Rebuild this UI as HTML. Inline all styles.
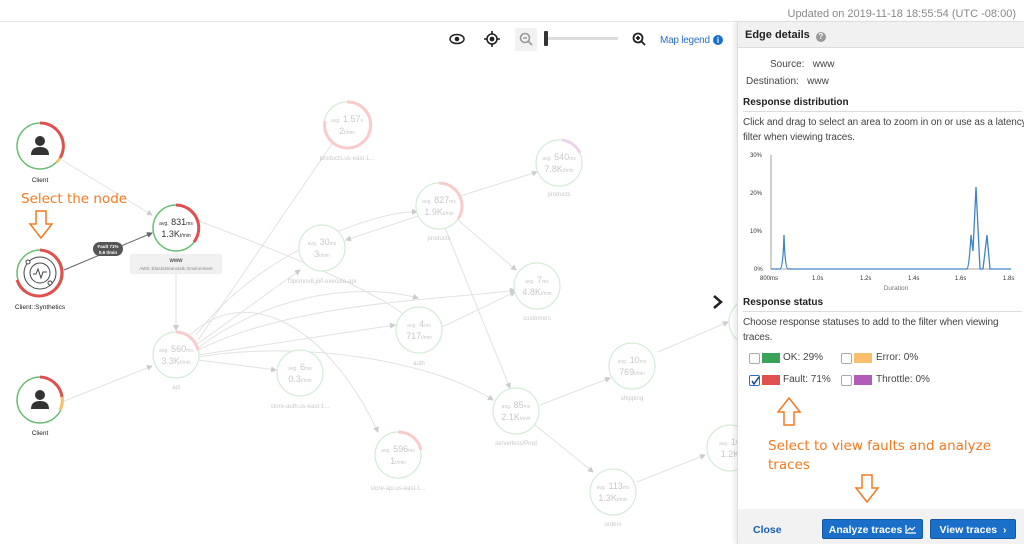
<!DOCTYPE html>
<html><head><meta charset="utf-8">
<style>
*{margin:0;padding:0;box-sizing:border-box}
body{width:1024px;height:544px;overflow:hidden;background:#fff;font-family:"Liberation Sans",sans-serif;position:relative}
.top{position:absolute;left:0;top:0;width:1024px;height:22px;border-bottom:1px solid #e6e6e6}
.upd{position:absolute;right:8px;top:8px;font-size:11px;color:#888}
.panel{position:absolute;left:737px;top:22px;width:287px;height:522px;background:#fff;border-left:1px solid #ddd;box-shadow:-3px 0 4px rgba(0,0,0,.08)}
.ph{height:26px;background:#f1f1f1;border-bottom:1px solid #ddd;font-size:11px;font-weight:bold;color:#222;padding:7px 7px}
.q{display:inline-block;width:10px;height:10px;border-radius:50%;background:#999;color:#fff;font-size:8px;text-align:center;line-height:10px;vertical-align:-1px;margin-left:3px}
.kv{font-size:10px;color:#444;position:absolute}
.sec{position:absolute;left:5px;width:279px;font-size:10px;font-weight:bold;color:#222;border-bottom:1px solid #ddd;padding-bottom:3px}
.txt{position:absolute;left:5px;font-size:10px;color:#444;line-height:15px;width:284px;letter-spacing:-0.1px}
.cb{position:absolute;width:11px;height:11px;border:1px solid #aaa;border-radius:2px;background:#fff}
.sw{position:absolute;width:18px;height:10px}
.lbl{position:absolute;font-size:10px;color:#444}
.foot{position:absolute;left:0;top:487px;width:287px;height:35px;background:#f2f2f2}
.btn{position:absolute;top:497px;height:20px;background:#1a6fc9;color:#fff;font-size:10.5px;font-weight:bold;border-radius:2px;text-align:center;line-height:20px;border:1px solid #14589f}
.or{color:#f47a20;font-family:"DejaVu Sans",sans-serif;font-size:13.5px;position:absolute}
</style></head><body>
<div class="top"><div class="upd">Updated on 2019-11-18 18:55:54 (UTC -08:00)</div></div>

<svg width="737" height="544" style="position:absolute;left:0;top:0" font-family="Liberation Sans">
<defs><marker id="a" markerWidth="6" markerHeight="6" refX="5" refY="3" orient="auto"><path d="M0,0L6,3L0,6z" fill="#ccc"/></marker>
<marker id="b" markerWidth="6" markerHeight="6" refX="5" refY="3" orient="auto"><path d="M0,0L6,3L0,6z" fill="#666"/></marker></defs>
<g transform="translate(457,39)"><ellipse cx="0" cy="0" rx="7" ry="4.5" fill="none" stroke="#222" stroke-width="1.5"/><circle cx="0" cy="0" r="2.3" fill="#222"/></g>
<g transform="translate(492,39)" stroke="#222" stroke-width="1.6" fill="none"><circle r="5"/><circle r="1.6" fill="#222"/><path d="M0,-8V-5M0,5V8M-8,0H-5M5,0H8"/></g>
<rect x="515" y="28" width="22" height="23" rx="2" fill="#f2f2f2"/>
<g transform="translate(525,38)" stroke="#999" stroke-width="1.6" fill="none"><circle r="4.5"/><path d="M3,3L7,7M-2,0H2"/></g>
<rect x="544" y="31" width="4" height="15" rx="1" fill="#333"/><rect x="548" y="37" width="70" height="3" fill="#ddd"/>
<g transform="translate(638,38)" stroke="#222" stroke-width="1.8" fill="none"><circle r="4.5"/><path d="M3,3L7,7M-2,0H2M0,-2V2"/></g>
<text x="660" y="43" font-size="10" fill="#2a6fc9" textLength="50">Map legend</text><circle cx="718" cy="40" r="5" fill="#1a6fc9"/><text x="718" y="43" font-size="8" fill="#fff" text-anchor="middle" font-weight="bold">i</text>
<g stroke="#e2e2e2" stroke-width="1" fill="none" marker-end="url(#a)">
<path d="M62,160L152,215"/>
<path d="M62,402L152,366"/>
<path d="M176,252L176,330"/>
<path d="M196,220C250,240 380,290 410,320"/>
<path d="M198,340L340,132"/>
<path d="M196,345L300,270"/>
<path d="M198,348C260,300 350,280 418,298" />
<path d="M198,355L395,325"/>
<path d="M198,350C300,300 450,300 515,290"/>
<path d="M198,357C300,340 430,360 493,400"/>
<path d="M198,360L276,370"/>
<path d="M190,335C250,280 330,330 378,432"/>
<path d="M196,335C260,250 380,210 417,212"/>
<path d="M418,216L346,240"/>
<path d="M460,196L537,172"/>
<path d="M458,220L516,270"/>
<path d="M445,228L510,388"/>
<path d="M440,328L515,292"/>
<path d="M540,405L610,378"/>
<path d="M535,425L593,472"/>
<path d="M637,482L705,455"/>
<path d="M658,352L728,322"/>
</g>
<path d="M64,270L152,233" stroke="#666" stroke-width="1" marker-end="url(#b)"/>
<rect x="93" y="242" width="30" height="14" rx="7" fill="#555"/>
<text x="108" y="248" font-size="4.5" fill="#fff" text-anchor="middle" font-weight="bold">Fault 71%</text>
<text x="108" y="254" font-size="4.5" fill="#fff" text-anchor="middle" font-weight="bold">0.6 t/min</text>
<g>
<circle cx="40" cy="146" r="23" fill="#fff" stroke="#6bbf76" stroke-width="1.5"/>
<path d="M40,123A23,23 0 0 1 60,158" stroke="#e05050" stroke-width="3" fill="none"/>
<path d="M60,158A23,23 0 0 1 57,162" stroke="#f5c06b" stroke-width="3" fill="none"/>
<circle cx="40" cy="141" r="5" fill="#333"/><path d="M31,155Q31,147 40,147Q49,147 49,155Z" fill="#333"/>
<text x="40" y="182" font-size="6.5" fill="#222" text-anchor="middle">Client</text>
</g>
<g>
<circle cx="40" cy="400" r="23" fill="#fff" stroke="#6bbf76" stroke-width="1.5"/>
<path d="M40,377A23,23 0 0 1 62,397" stroke="#e05050" stroke-width="3" fill="none"/>
<path d="M62,397A23,23 0 0 1 60,410" stroke="#f5c06b" stroke-width="3" fill="none"/>
<circle cx="40" cy="395" r="5" fill="#333"/><path d="M31,409Q31,401 40,401Q49,401 49,409Z" fill="#333"/>
<text x="40" y="435" font-size="6.5" fill="#222" text-anchor="middle">Client</text>
</g>
<g>
<circle cx="40" cy="273" r="23" fill="#fff" stroke="#6bbf76" stroke-width="1.5"/>
<path d="M40,250A23,23 0 1 1 17,280" stroke="#e05050" stroke-width="3" fill="none"/>
<circle cx="40" cy="273" r="16" fill="none" stroke="#444" stroke-width="1"/>
<circle cx="40" cy="273" r="10" fill="none" stroke="#444" stroke-width="1"/>
<circle cx="28" cy="262" r="2" fill="#fff" stroke="#444"/><circle cx="50" cy="283" r="2" fill="#fff" stroke="#444"/>
<path d="M33,274H36L38,269L41,278L43,272H47" stroke="#444" fill="none"/>
<text x="40" y="309" font-size="6.5" fill="#222" text-anchor="middle">Client::Synthetics</text>
</g>
<g>
<circle cx="176" cy="228" r="23" fill="#fff" stroke="#6bbf76" stroke-width="1.5"/>
<path d="M176,205A23,23 0 0 1 194,242" stroke="#e05050" stroke-width="3" fill="none"/>
<text x="176" y="225" font-size="9" fill="#333" text-anchor="middle"><tspan font-size="5">avg.</tspan> 831<tspan font-size="5">ms</tspan></text>
<text x="176" y="237" font-size="9" fill="#333" text-anchor="middle">1.3K<tspan font-size="5">t/min</tspan></text>
<rect x="130" y="254" width="92" height="20" rx="2" fill="#f0f0f0"/>
<text x="176" y="262" font-size="6" fill="#222" text-anchor="middle">www</text>
<text x="176" y="270" font-size="4.5" fill="#888" text-anchor="middle">AWS::ElasticBeanstalk::Environment</text>
</g>
<g fill="#fff" stroke="#d3ecd6" stroke-width="1.2">
<circle cx="176" cy="355" r="23"/><path d="M176,332A23,23 0 0 1 198,350" stroke="#f8cccc" stroke-width="3" fill="none"/>
<circle cx="347" cy="125" r="23"/><path d="M347,102A23,23 0 1 1 325,121" stroke="#f8cccc" stroke-width="3" fill="none"/>
<circle cx="439" cy="206" r="23"/><path d="M439,183A23,23 0 0 1 458,219" stroke="#f8cccc" stroke-width="3" fill="none"/>
<circle cx="559" cy="163" r="23"/><path d="M562,140A23,23 0 0 1 580,153" stroke="#ecd3ec" stroke-width="3" fill="none"/>
<circle cx="322" cy="248" r="23"/>
<circle cx="537" cy="286" r="23"/>
<circle cx="419" cy="330" r="23"/>
<circle cx="300" cy="373" r="23"/>
<circle cx="398" cy="455" r="23"/><path d="M398,432A23,23 0 0 1 421,450" stroke="#f8cccc" stroke-width="3" fill="none"/>
<circle cx="516" cy="411" r="23"/>
<circle cx="632" cy="366" r="23"/>
<circle cx="613" cy="492" r="23"/>
<circle cx="730" cy="448" r="23"/>
<circle cx="752" cy="322" r="23"/>
</g>
<g fill="#c8c8c8" font-size="9" text-anchor="middle">
<text x="176" y="352"><tspan font-size="5">avg.</tspan> 560<tspan font-size="5">ms</tspan></text><text x="176" y="364">3.3K<tspan font-size="5">t/min</tspan></text><text x="176" y="389" font-size="6">api</text>
<text x="347" y="122"><tspan font-size="5">avg.</tspan> 1.57<tspan font-size="5">s</tspan></text><text x="347" y="134">2<tspan font-size="5">t/min</tspan></text><text x="347" y="160" font-size="6">products.us-east-1...</text>
<text x="439" y="203"><tspan font-size="5">avg.</tspan> 827<tspan font-size="5">ms</tspan></text><text x="439" y="215">1.9K<tspan font-size="5">t/min</tspan></text><text x="439" y="240" font-size="6">products</text>
<text x="559" y="160"><tspan font-size="5">avg.</tspan> 540<tspan font-size="5">ms</tspan></text><text x="559" y="172">7.8K<tspan font-size="5">t/min</tspan></text><text x="559" y="196" font-size="6">products</text>
<text x="322" y="245"><tspan font-size="5">avg.</tspan> 30<tspan font-size="5">ms</tspan></text><text x="322" y="257">3<tspan font-size="5">t/min</tspan></text><text x="322" y="283" font-size="6">f3pcmnv8.jo0.execute-api</text>
<text x="537" y="283"><tspan font-size="5">avg.</tspan> 7<tspan font-size="5">ms</tspan></text><text x="537" y="295">4.8K<tspan font-size="5">t/min</tspan></text><text x="537" y="320" font-size="6">customers</text>
<text x="419" y="327"><tspan font-size="5">avg.</tspan> 4<tspan font-size="5">ms</tspan></text><text x="419" y="339">717<tspan font-size="5">t/min</tspan></text><text x="419" y="365" font-size="6">auth</text>
<text x="300" y="370"><tspan font-size="5">avg.</tspan> 6<tspan font-size="5">ms</tspan></text><text x="300" y="382">0.3<tspan font-size="5">t/min</tspan></text><text x="300" y="408" font-size="6">store-auth.us-east-1...</text>
<text x="398" y="452"><tspan font-size="5">avg.</tspan> 596<tspan font-size="5">ms</tspan></text><text x="398" y="464">1<tspan font-size="5">t/min</tspan></text><text x="398" y="490" font-size="6">store-api.us-east-1...</text>
<text x="516" y="408"><tspan font-size="5">avg.</tspan> 85<tspan font-size="5">ms</tspan></text><text x="516" y="420">2.1K<tspan font-size="5">t/min</tspan></text><text x="516" y="445" font-size="6">serverless/Prod</text>
<text x="632" y="363"><tspan font-size="5">avg.</tspan> 10<tspan font-size="5">ms</tspan></text><text x="632" y="375">769<tspan font-size="5">t/min</tspan></text><text x="632" y="400" font-size="6">shipping</text>
<text x="613" y="489"><tspan font-size="5">avg.</tspan> 113<tspan font-size="5">ms</tspan></text><text x="613" y="501">1.3K<tspan font-size="5">t/min</tspan></text><text x="613" y="526" font-size="6">orders</text>
<text x="730" y="445"><tspan font-size="5">avg.</tspan> 10</text><text x="730" y="457">1.2K</text>
</g>
<path d="M714,296L721,302L714,308" stroke="#222" stroke-width="2.5" fill="none"/>
</svg>
<div class="or" style="left:21px;top:191px">Select the node</div>
<svg style="position:absolute;left:28px;top:210px" width="26" height="30"><path d="M8,1H18V14H24L13,28L2,14H8Z" fill="#fff" stroke="#f47a20" stroke-width="1.5"/></svg>

<div class="panel">
<div class="ph">Edge details <span class="q">?</span></div>
<div class="kv" style="left:32px;top:37px">Source:&nbsp;&nbsp;&nbsp;www</div>
<div class="kv" style="left:8px;top:54px">Destination:&nbsp;&nbsp;&nbsp;www</div>
<div class="sec" style="top:75px">Response distribution</div>
<div class="txt" style="top:93px">Click and drag to select an area to zoom in on or use as a latency filter when viewing traces.</div>
<svg style="position:absolute;left:0;top:125px" width="287" height="150" font-family="Liberation Sans">
<g font-size="6" fill="#333"><text x="12" y="10">30%</text><text x="12" y="48">20%</text><text x="12" y="86">10%</text><text x="16" y="124">0%</text>
<text x="22" y="133">800ms</text><text x="74" y="133">1.0s</text><text x="122" y="133">1.2s</text><text x="170" y="133">1.4s</text><text x="217" y="133">1.6s</text><text x="265" y="133">1.8s</text></g>
<path d="M33,8V122H273" stroke="#888" fill="none" stroke-width=".8"/>
<path d="M33,122H42Q45,122 46,88Q47,122 50,122H229Q231,122 233,88L235,104L238,40L242,122L245,122L249,88L252,122H273" stroke="#3d84c8" stroke-width="1.3" fill="none"/>
<text x="158" y="143" font-size="6.5" fill="#777" text-anchor="middle">Duration</text>
</svg>
<div class="sec" style="top:275px">Response status</div>
<div class="txt" style="top:293px">Choose response statuses to add to the filter when viewing traces.</div>
<div class="cb" style="left:11px;top:331px"></div><div class="sw" style="left:24px;top:331px;background:#3aa35a"></div><div class="lbl" style="left:45px;top:330px">OK: 29%</div>
<div class="cb" style="left:103px;top:331px"></div><div class="sw" style="left:116px;top:331px;background:#fbbe6a"></div><div class="lbl" style="left:138px;top:330px">Error: 0%</div>
<div class="cb" style="left:11px;top:353px;border-color:#2a6fc9"><svg width="10" height="10" style="position:absolute;left:0;top:0"><path d="M2,5L4,8L9,1" stroke="#1a4f99" stroke-width="1.6" fill="none"/></svg></div><div class="sw" style="left:24px;top:353px;background:#e05050"></div><div class="lbl" style="left:45px;top:352px">Fault: 71%</div>
<div class="cb" style="left:103px;top:353px"></div><div class="sw" style="left:116px;top:353px;background:#b05cb8"></div><div class="lbl" style="left:138px;top:352px">Throttle: 0%</div>
<svg style="position:absolute;left:38px;top:374px" width="26" height="30"><path d="M8,29H18V16H24L13,2L2,16H8Z" fill="#fff" stroke="#f47a20" stroke-width="1.5"/></svg>
<div class="or" style="left:30px;top:415px;line-height:19px;width:240px">Select to view faults and analyze traces</div>
<div class="foot"></div>
<svg style="position:absolute;left:116px;top:452px" width="26" height="30"><path d="M8,1H18V14H24L13,28L2,14H8Z" fill="#fff" stroke="#f47a20" stroke-width="1.5"/></svg>
<div style="position:absolute;left:15px;top:502px;font-size:10.5px;font-weight:bold;color:#1a5fb4">Close</div>
<div class="btn" style="left:84px;width:101px">Analyze traces <svg width="11" height="9" style="vertical-align:-1px"><path d="M1,0V8H11M2,6L5,3L7,5L10,2" stroke="#fff" stroke-width="1.2" fill="none"/></svg></div>
<div class="btn" style="left:192px;width:86px">View traces &nbsp;›</div>
</div>
</body></html>
